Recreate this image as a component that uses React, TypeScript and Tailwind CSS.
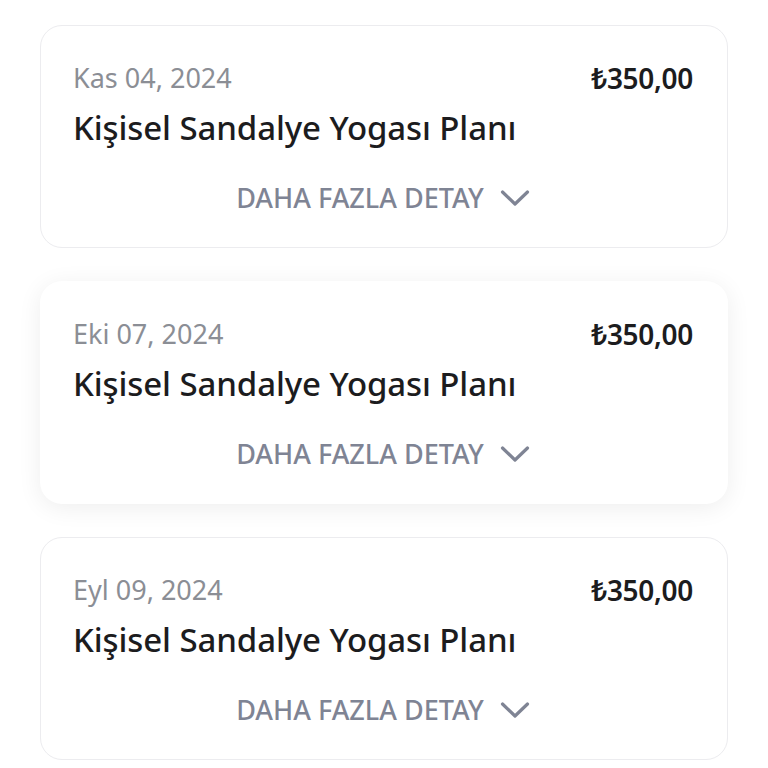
type Order = {
  date: string;
  title: string;
  price: string;
  raised?: boolean;
};

const orders: Order[] = [
  { date: 'Kas 04, 2024', title: 'Kişisel Sandalye Yogası Planı', price: '₺350,00' },
  { date: 'Eki 07, 2024', title: 'Kişisel Sandalye Yogası Planı', price: '₺350,00', raised: true },
  { date: 'Eyl 09, 2024', title: 'Kişisel Sandalye Yogası Planı', price: '₺350,00' },
];

function Chevron() {
  return (
    <svg width="30" height="20" viewBox="0 0 30 20" fill="none">
      <polyline
        points="2.5,4 15,16 27.5,4"
        stroke="currentColor"
        strokeWidth="3.2"
        strokeLinecap="round"
        strokeLinejoin="round"
      />
    </svg>
  );
}

function OrderCard({ order }: { order: Order }) {
  return (
    <div
      className={
        order.raised
          ? 'h-[223px] rounded-[22px] bg-white pl-[32px] pr-[34px] pt-[34px] shadow-[0_4px_24px_rgba(0,0,0,0.07)] border border-transparent'
          : 'h-[223px] rounded-[22px] bg-white pl-[32px] pr-[34px] pt-[34px] border border-[#ececef]'
      }
    >
      <div className="flex items-start justify-between">
        <div className="text-[27px] leading-[36px] text-[#8b8e95]">{order.date}</div>
        <div className="text-[28px] leading-[36px] font-semibold text-[#1c1c1e] tracking-[-0.3px]">{order.price}</div>
      </div>
      <div className="mt-[13px] text-[33px] leading-[38px] font-medium text-[#1c1c1e] tracking-[-0.1px]">{order.title}</div>
      <button className="mx-auto mt-[34px] flex items-center gap-[16px] text-[27px] leading-[34px] font-medium text-[#7f8494]">
        <span>DAHA FAZLA DETAY</span>
        <Chevron />
      </button>
    </div>
  );
}

export default function App() {
  return (
    <div
      className="min-h-[768px] bg-white px-[40px] pt-[25px] flex flex-col gap-[33px]"
      style={{ fontFamily: '"Noto Sans", sans-serif' }}
    >
      {orders.map((o, i) => (
        <OrderCard key={i} order={o} />
      ))}
    </div>
  );
}
